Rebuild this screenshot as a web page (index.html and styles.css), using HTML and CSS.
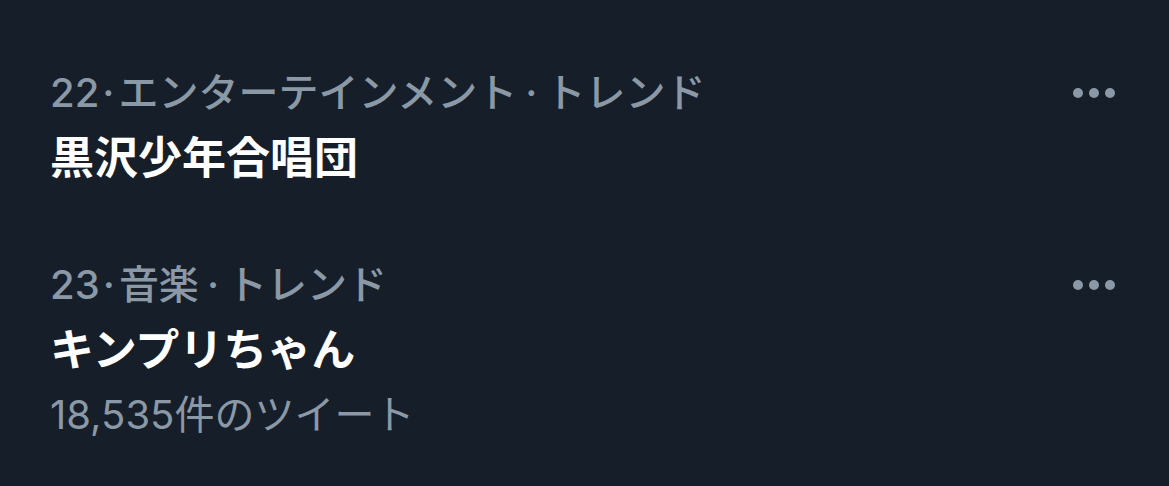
FILE: index.html
```html
<!DOCTYPE html>
<html lang="ja">
<head>
    <meta charset="UTF-8">
    <meta name="viewport" content="width=device-width, initial-scale=1.0">
    <title>トレンド</title>
    <link rel="stylesheet" href="styles.css">
</head>
<body>

<div class="trend-list">
    <div class="trend">
        <div class="trend-body">
            <div class="trend-meta">
                <span>22</span><span class="sep rank-sep">·</span><span>エンターテインメント</span><span class="sep">·</span><span>トレンド</span>
            </div>
            <div class="trend-title">黒沢少年合唱団</div>
        </div>
        <button class="more" aria-label="その他">
            <svg viewBox="0 0 44 12" width="44" height="12">
                <circle cx="6" cy="6" r="5"/>
                <circle cx="22" cy="6" r="5"/>
                <circle cx="38" cy="6" r="5"/>
            </svg>
        </button>
    </div>

    <div class="trend">
        <div class="trend-body">
            <div class="trend-meta">
                <span>23</span><span class="sep rank-sep">·</span><span>音楽</span><span class="sep">·</span><span>トレンド</span>
            </div>
            <div class="trend-title">キンプリちゃん</div>
            <div class="trend-count">18,535件のツイート</div>
        </div>
        <button class="more" aria-label="その他">
            <svg viewBox="0 0 44 12" width="44" height="12">
                <circle cx="6" cy="6" r="5"/>
                <circle cx="22" cy="6" r="5"/>
                <circle cx="38" cy="6" r="5"/>
            </svg>
        </button>
    </div>
</div>

</body>
</html>
```

FILE: styles.css
```css
body {
    margin: 0;
    background-color: #161e29;
    font-family: "Inter", "Noto Sans CJK JP", sans-serif;
}
.trend-list {
    display: flex;
    flex-direction: column;
    padding-top: 31px;
}
.trend {
    display: flex;
    justify-content: space-between;
    align-items: flex-start;
    padding: 31px 50px;
}
.trend-meta, .trend-count {
    color: #8b98a5;
    font-size: 40px;
    line-height: 62px;
}
.trend-meta {
    font-weight: 500;
}
.trend-meta .sep {
    margin: 0 8px;
}
.trend-meta .rank-sep {
    margin: 0 4px 0 3px;
}
.trend-title {
    color: #ffffff;
    font-size: 44px;
    font-weight: bold;
    line-height: 68px;
}
.more {
    background: none;
    border: none;
    padding: 0;
    margin-top: 25px;
    margin-right: 3px;
    display: flex;
}
.more svg {
    fill: #8b98a5;
}
```
